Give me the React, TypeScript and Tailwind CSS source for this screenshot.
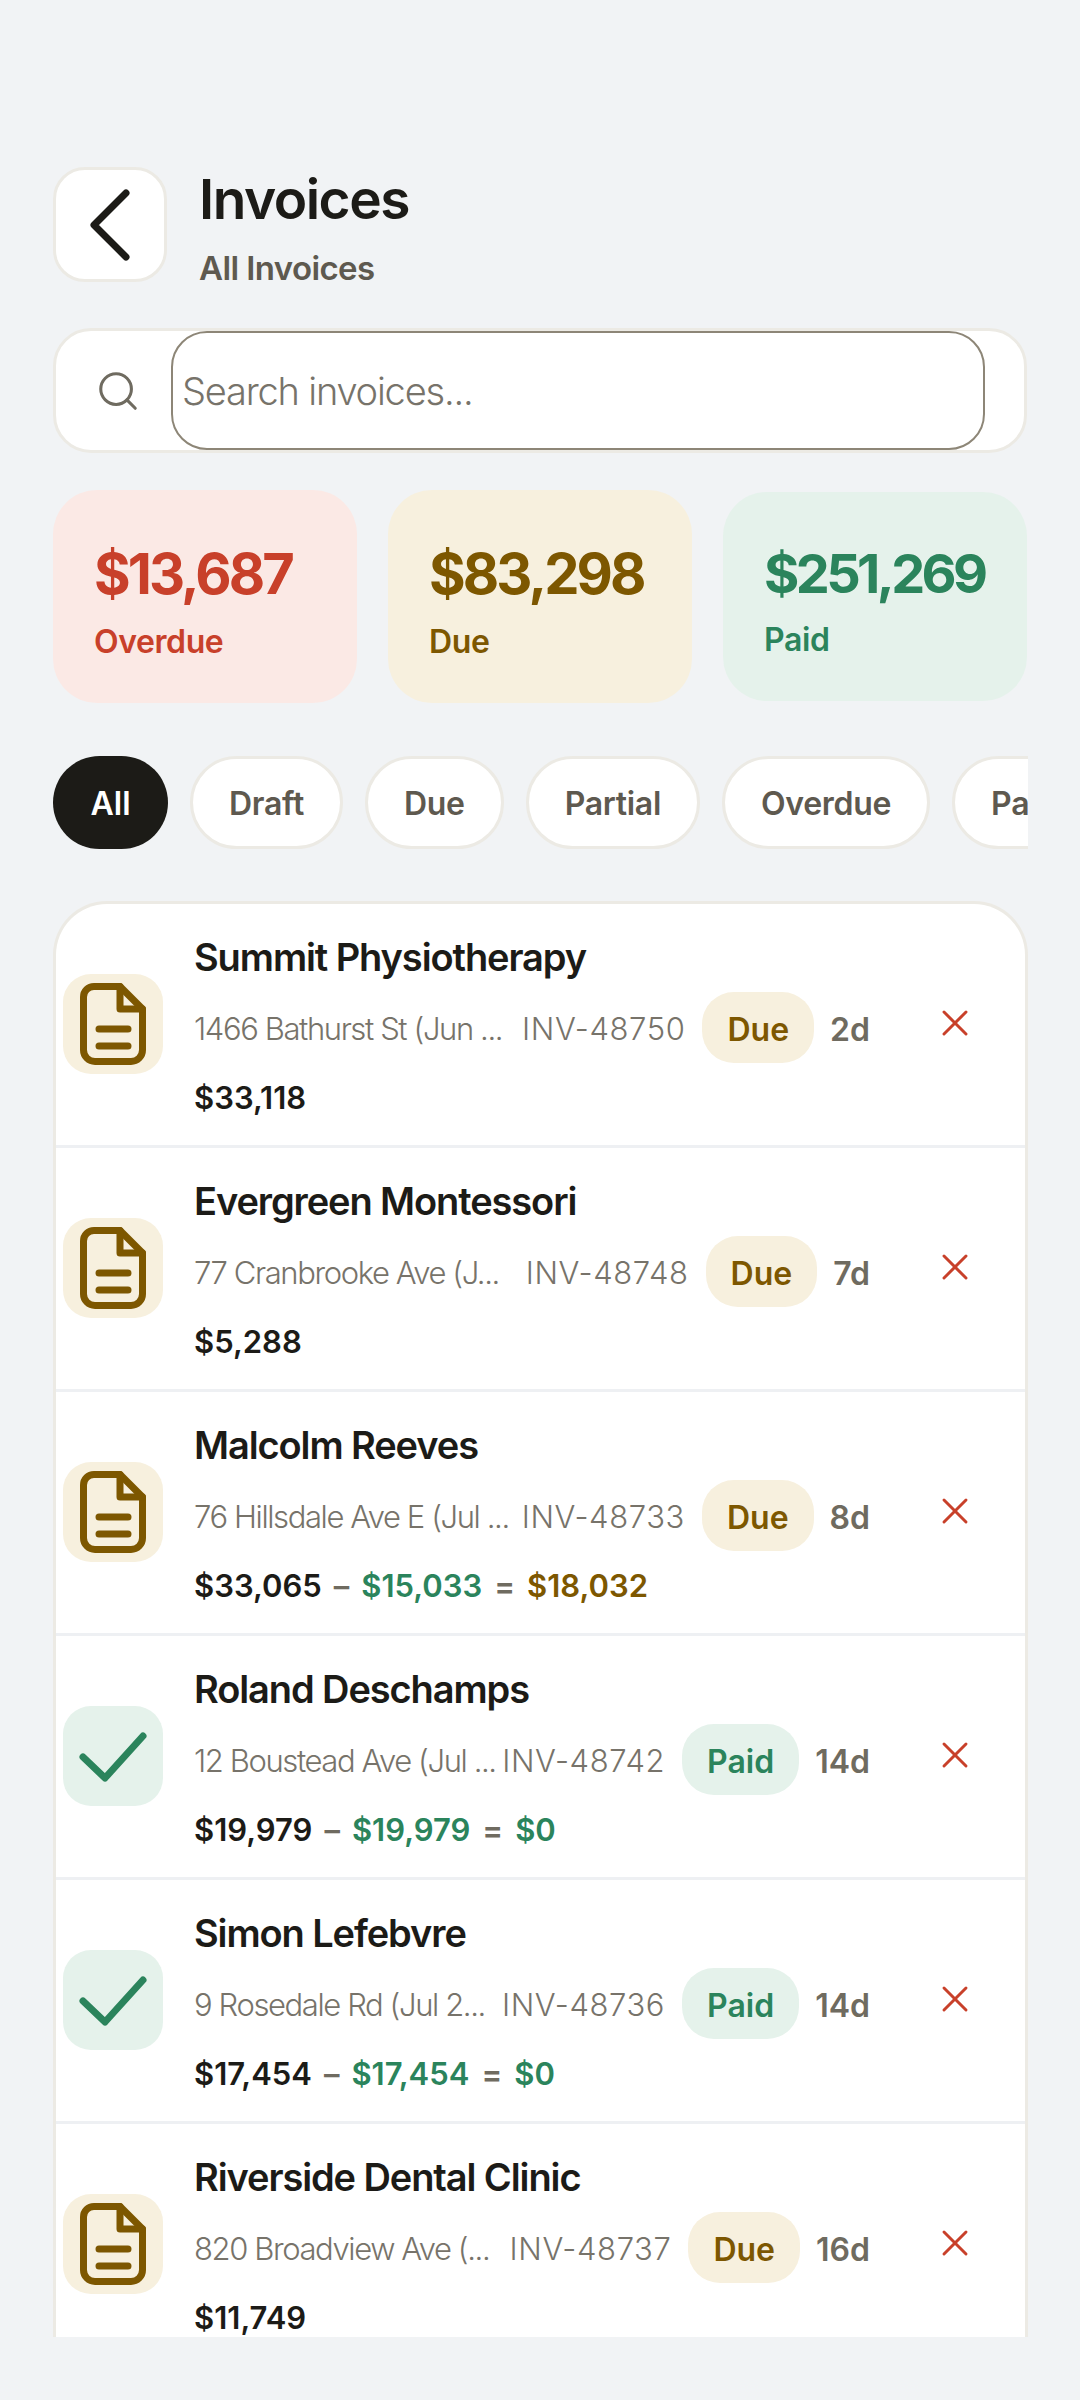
import { Search, X } from 'lucide-react';

interface Invoice {
  name: string;
  address: string;
  number: string;
  status: 'Due' | 'Paid';
  age: string;
  total: string;
  paid?: string;
  balance?: string;
}

const invoices: Invoice[] = [
  { name: 'Summit Physiotherapy', address: '1466 Bathurst St (Jun ...', number: 'INV-48750', status: 'Due', age: '2d', total: '$33,118' },
  { name: 'Evergreen Montessori', address: '77 Cranbrooke Ave (J...', number: 'INV-48748', status: 'Due', age: '7d', total: '$5,288' },
  { name: 'Malcolm Reeves', address: '76 Hillsdale Ave E (Jul ...', number: 'INV-48733', status: 'Due', age: '8d', total: '$33,065', paid: '$15,033', balance: '$18,032' },
  { name: 'Roland Deschamps', address: '12 Boustead Ave (Jul ...', number: 'INV-48742', status: 'Paid', age: '14d', total: '$19,979', paid: '$19,979', balance: '$0' },
  { name: 'Simon Lefebvre', address: '9 Rosedale Rd (Jul 2...', number: 'INV-48736', status: 'Paid', age: '14d', total: '$17,454', paid: '$17,454', balance: '$0' },
  { name: 'Riverside Dental Clinic', address: '820 Broadview Ave (...', number: 'INV-48737', status: 'Due', age: '16d', total: '$11,749' },
];

const filters = ['Draft', 'Due', 'Partial', 'Overdue', 'Paid'];

function DocIcon() {
  return (
    <svg width="66" height="82" viewBox="0 0 66 82" fill="none" stroke="#7d5700" strokeWidth="7" strokeLinecap="round" strokeLinejoin="round">
      <path d="M14 3.5H40L62.5 26V67A11.5 11.5 0 0 1 51 78.5H15A11.5 11.5 0 0 1 3.5 67V14A10.5 10.5 0 0 1 14 3.5Z" />
      <path d="M40 3.5V26H62.5" />
      <path d="M19 46H48M19 63H48" />
    </svg>
  );
}

function CheckIcon() {
  return (
    <svg width="70" height="54" viewBox="0 0 70 54" fill="none" stroke="#2b845c" strokeWidth="7" strokeLinecap="round" strokeLinejoin="round">
      <path d="M5 28L27 49L65 7" />
    </svg>
  );
}

function InvoiceRow({ invoice }: { invoice: Invoice }) {
  const isPaid = invoice.status === 'Paid';
  return (
    <div className="flex h-[244px] shrink-0 items-center border-b-[3px] border-[#eef0f3] pl-[7px]">
      <div className={`mb-[2px] flex h-[100px] w-[100px] shrink-0 items-center justify-center rounded-[28px] ${isPaid ? 'bg-[#e5f2eb]' : 'bg-[#f7f0de]'}`}>
        {isPaid ? <CheckIcon /> : <DocIcon />}
      </div>
      <div className="ml-[31px] flex w-[676px] shrink-0 flex-col self-stretch pt-[29px]">
        <div className="h-[48px] text-[38px] leading-[48px] font-semibold tracking-[-1.1px] text-[#1c1b17]">{invoice.name}</div>
        <div className="mt-[11px] flex h-[71px] items-center">
          <span className="min-w-0 flex-1 truncate pt-[4px] text-[31px] font-light tracking-[-1.4px] text-[#77736a]">{invoice.address}</span>
          <span className="ml-[3px] pt-[4px] text-[31px] font-light tracking-[0.6px] text-[#77736a]">{invoice.number}</span>
          <span className={`ml-[17px] flex h-[71px] items-center rounded-[32px] px-[25px] pt-[4px] text-[32px] font-semibold ${isPaid ? 'bg-[#e5f2eb] text-[#2b845c]' : 'bg-[#f7f0de] text-[#7d5700]'}`}>
            {invoice.status}
          </span>
          <span className="ml-[16px] pt-[4px] text-[32px] font-semibold text-[#6f6b60]">{invoice.age}</span>
        </div>
        <div className="mt-[15px] flex h-[40px] items-center text-[31px] font-semibold">
          <span className="text-[#1c1b17]">{invoice.total}</span>
          {invoice.paid && (
            <>
              <span className="mx-[12px] text-[#6f6b60]">–</span>
              <span className="text-[#2b845c]">{invoice.paid}</span>
              <span className="mx-[12px] text-[#6f6b60]">=</span>
              <span className={isPaid ? 'text-[#2b845c]' : 'text-[#7d5700]'}>{invoice.balance}</span>
            </>
          )}
        </div>
      </div>
      <div className="flex flex-1 items-center justify-center pb-[4px] pl-[14px]">
        <X size={44} strokeWidth={1.6} color="#c8402a" />
      </div>
    </div>
  );
}

export default function App() {
  return (
    <div className="flex h-[2400px] w-[1080px] flex-col overflow-hidden bg-[#f1f3f5] px-[53px] pt-[167px] font-[Inter,sans-serif]">
      <div className="flex h-[115px] items-center gap-[32px]">
        <button className="flex h-[115px] w-[114px] items-center justify-center rounded-[32px] border-[3px] border-[#eceae4] bg-white">
          <svg width="44" height="72" viewBox="0 0 44 72" fill="none" stroke="#1c1b17" strokeWidth="7" strokeLinecap="round" strokeLinejoin="round">
            <path d="M38 4L6 36L38 68" />
          </svg>
        </button>
        <div className="flex flex-col pt-[6px]">
          <div className="text-[55px] leading-[64px] font-semibold tracking-[-1.5px] text-[#1c1b17]">Invoices</div>
          <div className="mt-[17px] text-[33px] leading-[40px] font-semibold tracking-[-0.6px] text-[#5e594f]">All Invoices</div>
        </div>
      </div>

      <div className="mt-[46px] flex h-[125px] items-center rounded-[38px] border-[3px] border-[#eceae4] bg-white pl-[39px]">
        <Search size={46} strokeWidth={1.6} color="#6f6b60" />
        <input
          placeholder="Search invoices..."
          className="ml-[30px] h-[119px] w-[814px] rounded-[36px] border-2 border-[#8d8677] px-[9px] text-[38px] font-light tracking-[-1.2px] outline-none placeholder:text-[#77736a]"
        />
      </div>

      <div className="mt-[37px] flex items-center gap-[31px]">
        <div className="flex h-[213px] w-[304px] flex-col justify-center rounded-[44px] bg-[#fbe9e5] pt-[8px] pl-[41px]">
          <div className="text-[56px] leading-[68px] font-bold tracking-[-2.9px] text-[#c8402a]">$13,687</div>
          <div className="mt-[14px] text-[32px] leading-[40px] font-semibold tracking-[-0.4px] text-[#c8402a]">Overdue</div>
        </div>
        <div className="flex h-[213px] w-[304px] flex-col justify-center rounded-[44px] bg-[#f7f0de] pt-[8px] pl-[41px]">
          <div className="text-[56px] leading-[68px] font-bold tracking-[-2.9px] text-[#7d5700]">$83,298</div>
          <div className="mt-[14px] text-[32px] leading-[40px] font-semibold tracking-[-0.4px] text-[#7d5700]">Due</div>
        </div>
        <div className="flex h-[209px] w-[304px] flex-col justify-center rounded-[44px] bg-[#e5f2eb] pt-[6px] pl-[41px]">
          <div className="text-[54px] leading-[68px] font-bold tracking-[-3.6px] text-[#2b845c]">$251,269</div>
          <div className="mt-[12px] text-[32px] leading-[40px] font-semibold tracking-[-0.4px] text-[#2b845c]">Paid</div>
        </div>
      </div>

      <div className="mt-[53px] flex w-[975px] gap-[22px] overflow-hidden">
        <div className="flex h-[93px] w-[115px] shrink-0 items-center justify-center rounded-full bg-[#1c1b17] pt-[3px] text-[32px] font-semibold text-white">All</div>
        {filters.map((filter) => (
          <div key={filter} className="flex h-[93px] shrink-0 items-center rounded-full border-[3px] border-[#eceae4] bg-white px-[36px] pt-[3px] text-[32px] font-semibold tracking-[-0.3px] text-[#5e594f]">
            {filter}
          </div>
        ))}
      </div>

      <div className="mt-[52px] flex h-[1436px] w-[975px] flex-col overflow-hidden rounded-t-[54px] border-x-[3px] border-t-[3px] border-[#eceae4] bg-white">
        {invoices.map((invoice) => (
          <InvoiceRow key={invoice.number} invoice={invoice} />
        ))}
      </div>
    </div>
  );
}
